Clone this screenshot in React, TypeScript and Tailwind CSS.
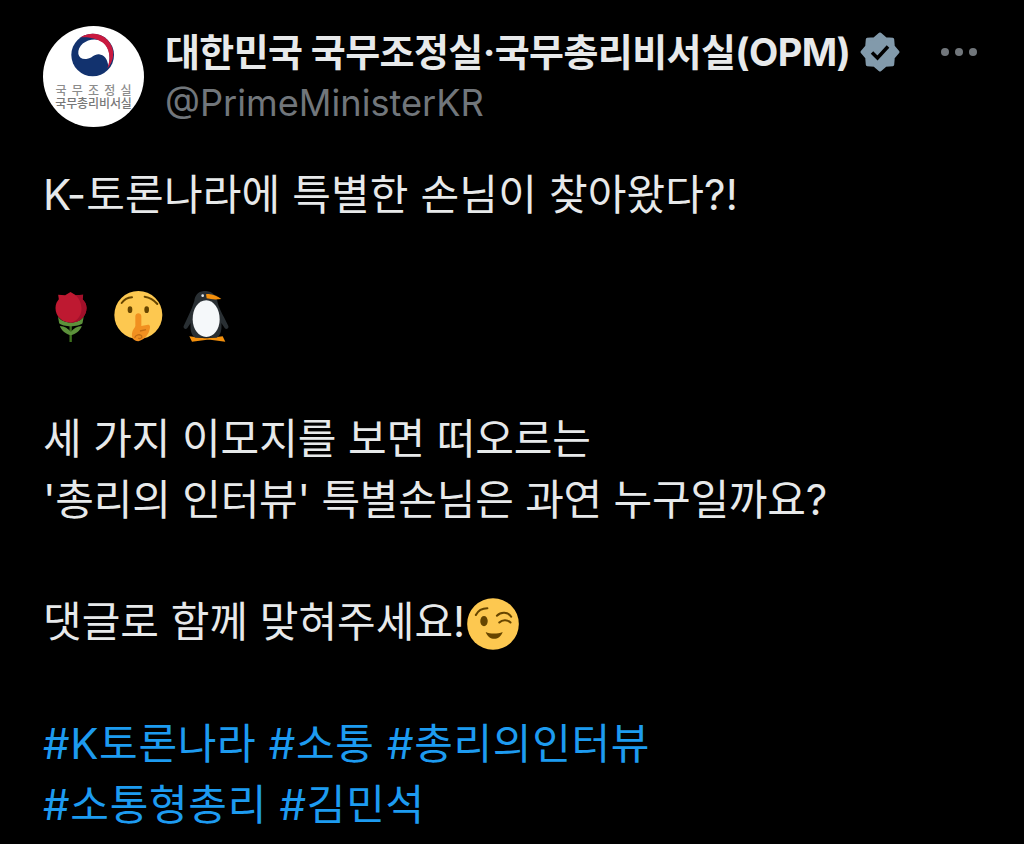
import React from "react";

const FONT = "font-['Inter','Noto_Sans_CJK_KR',sans-serif]";

const Avatar = () => (
  <div className="flex h-[101px] w-[101px] shrink-0 flex-col items-center rounded-full bg-white pt-[4px]">
    <svg viewBox="0 0 150 150" className="h-[50px] w-[50px]">
      <circle cx="71" cy="75" r="64" fill="#12326e" />
      <path d="M28 72C25 42 60 22 90 30 118 40 128 75 118 108 115 85 105 75 90 73 75 72 70 85 52 87 38 88 30 82 28 72Z" fill="#fff" />
      <path d="M35 22C60 5 100 8 120 35 140 60 135 95 115 115 127 85 122 55 102 38 82 24 55 20 35 22Z" fill="#c9193f" />
    </svg>
    <div className="mt-[4px] flex w-[76px] justify-between text-[12px] leading-[13px] font-medium text-[#8c8c8c]">
      <span>국</span>
      <span>무</span>
      <span>조</span>
      <span>정</span>
      <span>실</span>
    </div>
    <div className="text-[12px] leading-[14px] font-medium tracking-[-0.1px] whitespace-nowrap text-[#777]">
      국무총리비서실
    </div>
  </div>
);

const VerifiedBadge = () => (
  <svg viewBox="0 0 40 40" className="ml-[10px] h-[40px] w-[40px] shrink-0">
    <path
      fill="#829aab"
      stroke="#829aab"
      strokeWidth="3"
      strokeLinejoin="round"
      d="M20 2 25.500 6.700 32.700 7.300 33.300 14.500 38 20 33.300 25.500 32.700 32.700 25.500 33.300 20 38 14.500 33.300 7.300 32.700 6.700 25.500 2 20 6.700 14.500 7.300 7.300 14.500 6.700Z"
    />
    <path d="M12 20.500 17.500 26 28 14.500" fill="none" stroke="#000" strokeWidth="3.500" />
  </svg>
);

const Rose = () => (
  <svg viewBox="0 0 110 150" className="h-[50px] w-[37px]">
    <path d="M49 100h7v50h-7z" fill="#3e721d" />
    <path d="M20 102c14 1 26 8 33 18 7-10 19-17 33-18-5 14-18 24-33 28-15-4-28-14-33-28z" fill="#5c913b" />
    <path d="M14 72c10 26 68 26 78 0l-4 22c-12 12-58 12-70 0z" fill="#5c913b" />
    <path d="M7 48C7 36 12 28 17 22L15 8l21 2L52 0l16 10 22-2-2 14c6 6 12 14 12 26 0 24-20 44-47 44S7 72 7 48z" fill="#be1931" />
    <path d="M68 10l22-2-2 14c6 6 12 14 12 26 0 24-20 44-47 44 22-6 33-24 32-44-1-16-7-28-17-38z" fill="#a0102a" />
  </svg>
);

const Shush = () => (
  <svg viewBox="0 0 150 153" className="h-[51px] w-[50px]">
    <ellipse cx="73" cy="72" rx="72" ry="72" fill="#fdc850" />
    <ellipse cx="48" cy="56" rx="7" ry="10" fill="#664500" />
    <ellipse cx="98" cy="56" rx="7" ry="10" fill="#664500" />
    <path d="M23 36C30 26 42 20 54 19M92 17C106 19 120 27 130 39" stroke="#664500" strokeWidth="6" fill="none" strokeLinecap="round" />
    <path d="M64 76c0-12 18-12 18 0v29l20-4c7 0 7 8 5 14-3 16-16 32-34 36-14-1-21-10-19-24 1-10 9-17 10-22z" fill="#f19020" />
    <path d="M62 140c3-8 16-12 21-5 3 6-6 10-10 6M78 120l18-4" stroke="#c46f14" strokeWidth="4" fill="none" />
  </svg>
);

const Penguin = () => (
  <svg viewBox="0 0 150 153" className="h-[51px] w-[50px]">
    <path d="M25 136l45 6 10 0 45-6 8 16-45-6-10 0-45 6z" fill="#f4900c" />
    <path d="M68 0C50 2 42 14 40 30 32 58 18 82 8 105c-2 8 6 12 11 6l10-15c-2 20 2 38 14 44h64c12-6 16-24 14-44l10 15c5 6 13 2 11-6-10-23-26-47-32-70C108 12 90-2 68 0z" fill="#292f33" />
    <path d="M76 28C50 28 35 55 35 85s18 53 41 53 40-23 40-53-17-57-40-57z" fill="#f5f8fa" />
    <path d="M75 10c14-4 32 4 46 14-14 2-30 2-44-2z" fill="#f4900c" />
    <circle cx="65" cy="14" r="4" fill="#e1e8ed" />
  </svg>
);

const Wink = () => (
  <svg viewBox="0 0 153 153" className="ml-[2px] inline-block h-[52px] w-[52px] align-[-13px]">
    <circle cx="76.500" cy="76.500" r="76" fill="#fdc850" />
    <ellipse cx="50" cy="68" rx="11" ry="15" fill="#664500" />
    <path d="M26 50C32 38 46 30 60 30M88 52C100 40 120 40 130 55M95 72C105 62 120 64 128 72" stroke="#664500" strokeWidth="6" fill="none" strokeLinecap="round" />
    <path d="M55 100C68 106 90 106 105 100 100 114 90 120 80 120S60 114 55 100Z" fill="#664500" />
  </svg>
);

export default function App() {
  return (
    <div className={`h-[844px] overflow-hidden bg-black text-white ${FONT}`}>
      <header className="flex pt-[26px] pr-[47px] pl-[43px]">
        <Avatar />
        <div className="ml-[21px] min-w-0 flex-1">
          <div className="flex h-[52px] items-center">
            <span className="text-[38px] font-bold tracking-[-0.6px] whitespace-nowrap text-[#e7e9ea]">
              대한민국 국무조정실·국무총리비서실(OPM)
            </span>
            <VerifiedBadge />
            <div className="ml-auto flex gap-[6px]">
              <span className="h-[8px] w-[8px] rounded-full bg-[#71767b]" />
              <span className="h-[8px] w-[8px] rounded-full bg-[#71767b]" />
              <span className="h-[8px] w-[8px] rounded-full bg-[#71767b]" />
            </div>
          </div>
          <div className="text-[36.2px] leading-[50px] text-[#71767b]">@PrimeMinisterKR</div>
        </div>
      </header>
      <main className="mt-[36px] pl-[43px] text-[42px] leading-[61px] text-[#e7e9ea]">
        <p className="tracking-[0.15px]">K-토론나라에 특별한 손님이 찾아왔다?!</p>
        <p className="h-[61px]" />
        <div className="flex h-[61px] items-center">
          <span className="ml-[10px]">
            <Rose />
          </span>
          <span className="ml-[24px]">
            <Shush />
          </span>
          <span className="ml-[17px]">
            <Penguin />
          </span>
        </div>
        <p className="h-[61px]" />
        <p className="tracking-[-0.1px]">세 가지 이모지를 보면 떠오르는</p>
        <p className="tracking-[-0.22px]">'총리의 인터뷰' 특별손님은 과연 누구일까요?</p>
        <p className="h-[61px]" />
        <p>
          댓글로 함께 맞혀주세요!
          <Wink />
        </p>
        <p className="h-[61px]" />
        <p className="tracking-[0.65px] text-[#1d9bf0]">#K토론나라 #소통 #총리의인터뷰</p>
        <p className="tracking-[0.7px] text-[#1d9bf0]">#소통형총리 #김민석</p>
      </main>
    </div>
  );
}
